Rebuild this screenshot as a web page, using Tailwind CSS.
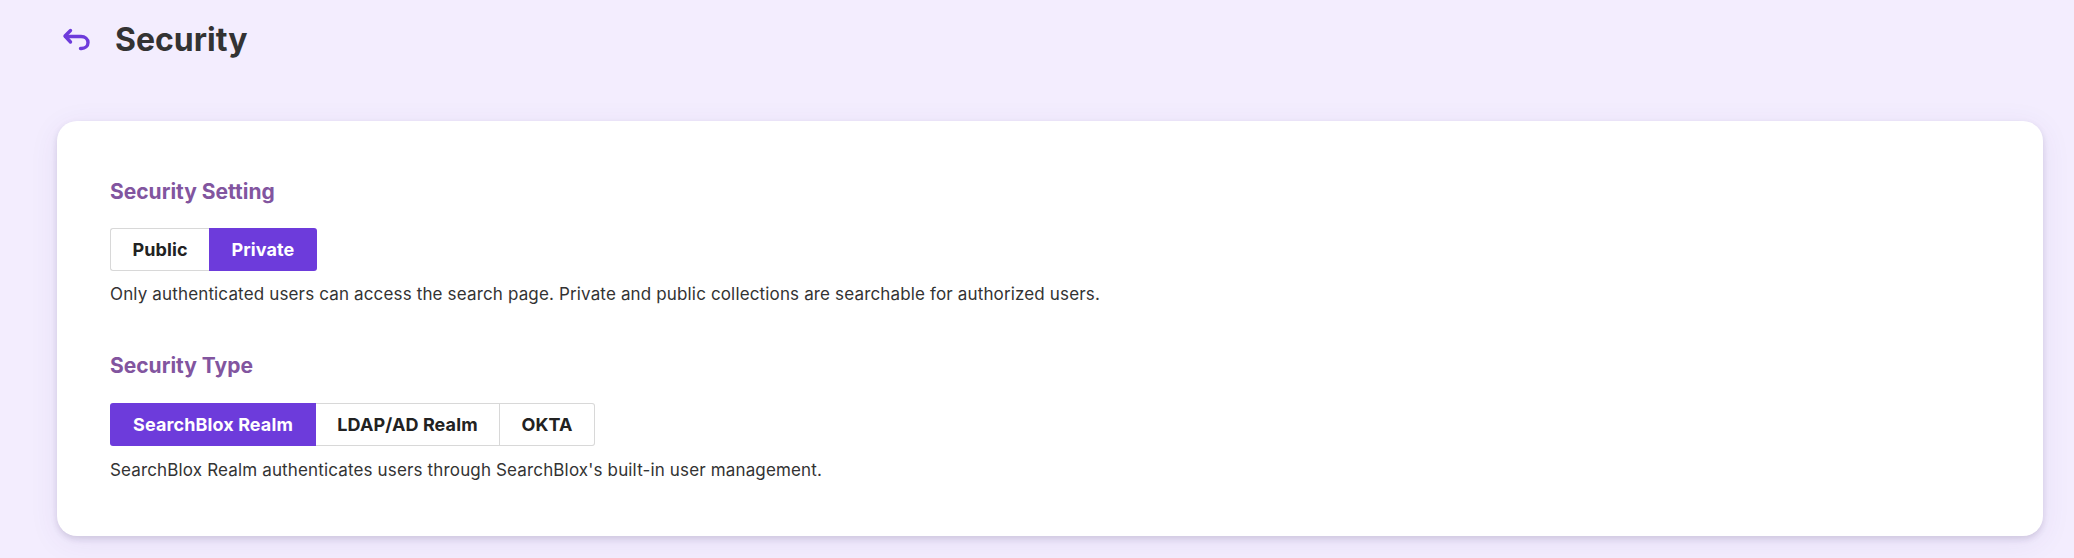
<!DOCTYPE html>
<html lang="en">
<head>
    <meta charset="UTF-8">
    <title>Security</title>
    <script src="https://cdn.jsdelivr.net/npm/@tailwindcss/browser@4"></script>
</head>
<body class="bg-[#f3edfe] h-[558px] overflow-hidden font-['Inter',sans-serif]">
    <header class="flex items-center h-[80px] pl-[62px]">
        <svg class="w-[28px] h-[28px] text-[#6d3bdb]" viewBox="0 0 28 28" fill="none" stroke="currentColor" stroke-width="3.4" stroke-linecap="round" stroke-linejoin="round">
            <path d="M8.5 4.5 L3 10 L8.5 16"/>
            <path d="M3.5 10.5 H19 C23 10.5 26 13 26 16.5 C26 20 23 22.5 19.5 22.5 H18.5"/>
        </svg>
        <h1 class="ml-[25px] text-[32px] font-bold text-[#333333]">Security</h1>
    </header>
    <main class="mt-[41px] ml-[57px] w-[1986px] h-[415px] bg-white rounded-[20px] shadow-[0_3px_6px_rgba(40,30,70,0.14),0_6px_30px_rgba(80,50,150,0.08)] px-[53px] pt-[59px]">
        <h2 class="text-[21px] leading-[24px] font-[650] text-[#82559f]">Security Setting</h2>
        <div class="flex mt-[24px] w-fit text-[18px] tracking-[0.1px] font-bold">
            <button class="w-[99px] h-[43px] border border-[#d8d8d8] border-r-0 rounded-l-[3px] text-[#222222]">Public</button>
            <button class="w-[108px] h-[43px] bg-[#6d3bdb] rounded-r-[3px] text-white">Private</button>
        </div>
        <p class="mt-[11px] text-[17px] leading-[24px] tracking-[0.15px] text-[#333333]">Only authenticated users can access the search page. Private and public collections are searchable for authorized users.</p>
        <h2 class="mt-[48px] text-[21px] leading-[24px] font-[650] text-[#82559f]">Security Type</h2>
        <div class="flex mt-[25px] w-fit text-[18px] tracking-[0.1px] font-bold">
            <button class="w-[206px] h-[43px] bg-[#6d3bdb] rounded-l-[3px] text-white">SearchBlox Realm</button>
            <button class="w-[184px] h-[43px] border-y border-[#d8d8d8] border-r text-[#222222]">LDAP/AD Realm</button>
            <button class="w-[95px] h-[43px] border-y border-r border-[#d8d8d8] rounded-r-[3px] text-[#222222]">OKTA</button>
        </div>
        <p class="mt-[12px] text-[17px] leading-[24px] tracking-[0.15px] text-[#333333]">SearchBlox Realm authenticates users through SearchBlox's built-in user management.</p>
    </main>
</body>
</html>
